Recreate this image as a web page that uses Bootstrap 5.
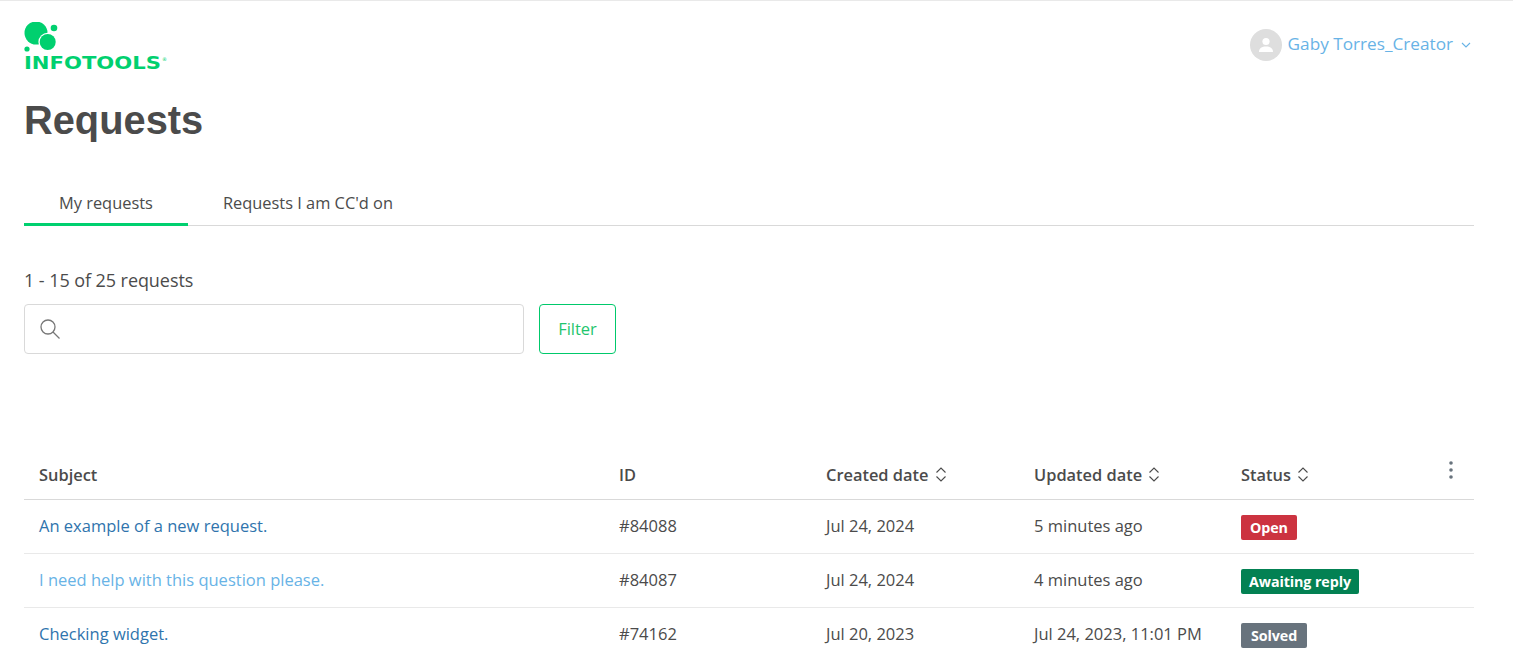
<!DOCTYPE html>
<html lang="en">
<head>
<meta charset="utf-8">
<title>Requests</title>
<link rel="stylesheet" href="https://cdn.jsdelivr.net/npm/bootstrap@5.3.0/dist/css/bootstrap.min.css">
<style>
html,body{height:660px;overflow:hidden}
body{font-family:"Open Sans","Noto Sans",sans-serif;font-size:16.5px;color:#4b4b4b;background:#fff;border-top:1px solid #e9e9e9}
.page-shell{padding:0 39px 0 24px}
.top-bar{height:71px}
.brand-logo{display:block;margin-top:21px}
.user-link{color:#68b3e6;text-decoration:none;font-size:17.2px;margin:28px 3px 0 0}
.user-name{margin-top:-2px}
.user-avatar{width:32px;height:32px;border-radius:50%;background:#dedede;margin-right:6px}
.page-title{font-family:"Liberation Sans",sans-serif;font-weight:700;font-size:39.8px;line-height:48px;color:#4b4b4b;margin:24px 0 0}
.tab-strip{margin-top:37px;border-bottom:1px solid #d9d9d9;height:45px}
.tab-item{color:#4b4b4b;text-decoration:none;padding:0 35px;height:45px;line-height:44px;margin-bottom:-1px;font-size:16.4px}
.tab-item.is-on{border-bottom:3px solid #00d06f}
.result-count{margin-top:42px;line-height:24px;font-size:18px;letter-spacing:-.07px}
.search-row{margin-top:12px;gap:15px}
.search-box{width:500px;height:50px;border:1px solid #d9d9d9;border-radius:4px;padding-left:14px}
.search-input{border:0;outline:0;flex:1;min-width:0;background:transparent}
.filter-btn{width:77px;height:50px;border:1px solid #00c96b;border-radius:4px;color:#1fc56e;background:#fff;padding:0;font-size:16.5px}
.req-table{width:1450px;table-layout:fixed;margin:87px 0 0;border-collapse:collapse}
.req-table th,.req-table td{padding:0 15px;vertical-align:middle;color:#4b4b4b;box-shadow:none;background:transparent}
.req-table thead th{height:58px;font-weight:600;font-size:16.4px;border-bottom:1px solid #d9d9d9;padding-top:12px}
.req-table tbody td{height:54px;border-bottom:1px solid #e9e9e9}
.req-table tbody td:first-child a{color:#2f74ad;text-decoration:none}
.req-table tbody td:first-child a.seen{color:#68b3e6}
.sort-mark{margin-left:2px;vertical-align:-2px}
.state-tag{display:inline-block;font-size:14.3px;font-weight:700;color:#fff;padding:0 9px;height:25px;line-height:25px;border-radius:2px;letter-spacing:-.1px;margin-top:3px}
.st-open{background:#cc3340}
.st-wait{background:#038153;padding:0 8px}
.st-done{background:#68737d;padding:0 10px}
.menu-cell{position:relative}
.kebab{position:absolute;right:21px;top:20px}
</style>
</head>
<body>
<div class="page-shell">
  <header class="top-bar d-flex justify-content-between align-items-start">
    <svg class="brand-logo" width="144" height="50" viewBox="0 0 144 50" role="img" aria-label="Infotools logo">
      <circle cx="12" cy="11" r="11.500" fill="#00d06f"/>
      <circle cx="30" cy="6" r="3.300" fill="#00d06f"/>
      <circle cx="3" cy="27" r="2.600" fill="#00d06f"/>
      <circle cx="23.700" cy="20" r="9.300" fill="#fff"/>
      <circle cx="23.700" cy="20" r="8" fill="#00d06f"/>
      <text x="0" y="47" font-family="'DejaVu Sans',sans-serif" font-weight="700" font-size="18" fill="#00d06f" textLength="137" lengthAdjust="spacingAndGlyphs">INFOTOOLS</text>
      <text x="138" y="39" font-family="'DejaVu Sans',sans-serif" font-size="5" fill="#00d06f">®</text>
    </svg>
    <a class="user-link d-flex align-items-center" href="#">
      <span class="user-avatar d-flex align-items-center justify-content-center">
        <svg width="16" height="16" viewBox="0 0 16 16"><circle cx="8" cy="4.500" r="3.600" fill="#fff"/><path d="M1 15c0-4 3-5.500 7-5.500s7 1.500 7 5.500z" fill="#fff"/></svg>
      </span>
      <span class="user-name">Gaby Torres_Creator</span>
      <svg class="ms-2" width="10" height="6" viewBox="0 0 10 6"><path d="M1 1l4 4 4-4" fill="none" stroke="#68b3e6" stroke-width="1.100"/></svg>
    </a>
  </header>
  <h1 class="page-title">Requests</h1>
  <nav class="tab-strip d-flex">
    <a class="tab-item is-on" href="#">My requests</a>
    <a class="tab-item" href="#">Requests I am CC'd on</a>
  </nav>
  <div class="result-count">1 - 15 of 25 requests</div>
  <div class="search-row d-flex">
    <div class="search-box d-flex align-items-center">
      <svg class="me-2" width="22" height="22" viewBox="0 0 22 22" fill="none" stroke="#777" stroke-width="1.300"><circle cx="9" cy="9" r="7"/><path d="M14 14l6.500 6.500"/></svg>
      <input class="search-input" type="text" aria-label="Search">
    </div>
    <button class="filter-btn btn" type="button">Filter</button>
  </div>
  <table class="table req-table">
    <colgroup><col style="width:580px"><col style="width:207px"><col style="width:208px"><col style="width:207px"><col style="width:248px"></colgroup>
    <thead>
      <tr>
        <th>Subject</th>
        <th>ID</th>
        <th>Created date <svg class="sort-mark" width="12" height="17" viewBox="0 0 12 17" fill="none" stroke="#4b4b4b" stroke-width="1.100"><path d="M1.500 6.500L6 2l4.500 4.500M1.500 10.500L6 15l4.500-4.500"/></svg></th>
        <th>Updated date <svg class="sort-mark" width="12" height="17" viewBox="0 0 12 17" fill="none" stroke="#4b4b4b" stroke-width="1.100"><path d="M1.500 6.500L6 2l4.500 4.500M1.500 10.500L6 15l4.500-4.500"/></svg></th>
        <th class="menu-cell">Status <svg class="sort-mark" width="12" height="17" viewBox="0 0 12 17" fill="none" stroke="#4b4b4b" stroke-width="1.100"><path d="M1.500 6.500L6 2l4.500 4.500M1.500 10.500L6 15l4.500-4.500"/></svg>
          <svg class="kebab" width="4" height="18" viewBox="0 0 4 18" fill="#68737d"><circle cx="2" cy="2" r="1.800"/><circle cx="2" cy="9" r="1.800"/><circle cx="2" cy="16" r="1.800"/></svg>
        </th>
      </tr>
    </thead>
    <tbody>
      <tr><td><a href="#">An example of a new request.</a></td><td>#84088</td><td>Jul 24, 2024</td><td>5 minutes ago</td><td><span class="state-tag st-open">Open</span></td></tr>
      <tr><td><a class="seen" href="#">I need help with this question please.</a></td><td>#84087</td><td>Jul 24, 2024</td><td>4 minutes ago</td><td><span class="state-tag st-wait">Awaiting reply</span></td></tr>
      <tr><td><a href="#">Checking widget.</a></td><td>#74162</td><td>Jul 20, 2023</td><td>Jul 24, 2023, 11:01 PM</td><td><span class="state-tag st-done">Solved</span></td></tr>
    </tbody>
  </table>
</div>
<script src="https://cdn.jsdelivr.net/npm/bootstrap@5.3.0/dist/js/bootstrap.bundle.min.js"></script>
</body>
</html>
